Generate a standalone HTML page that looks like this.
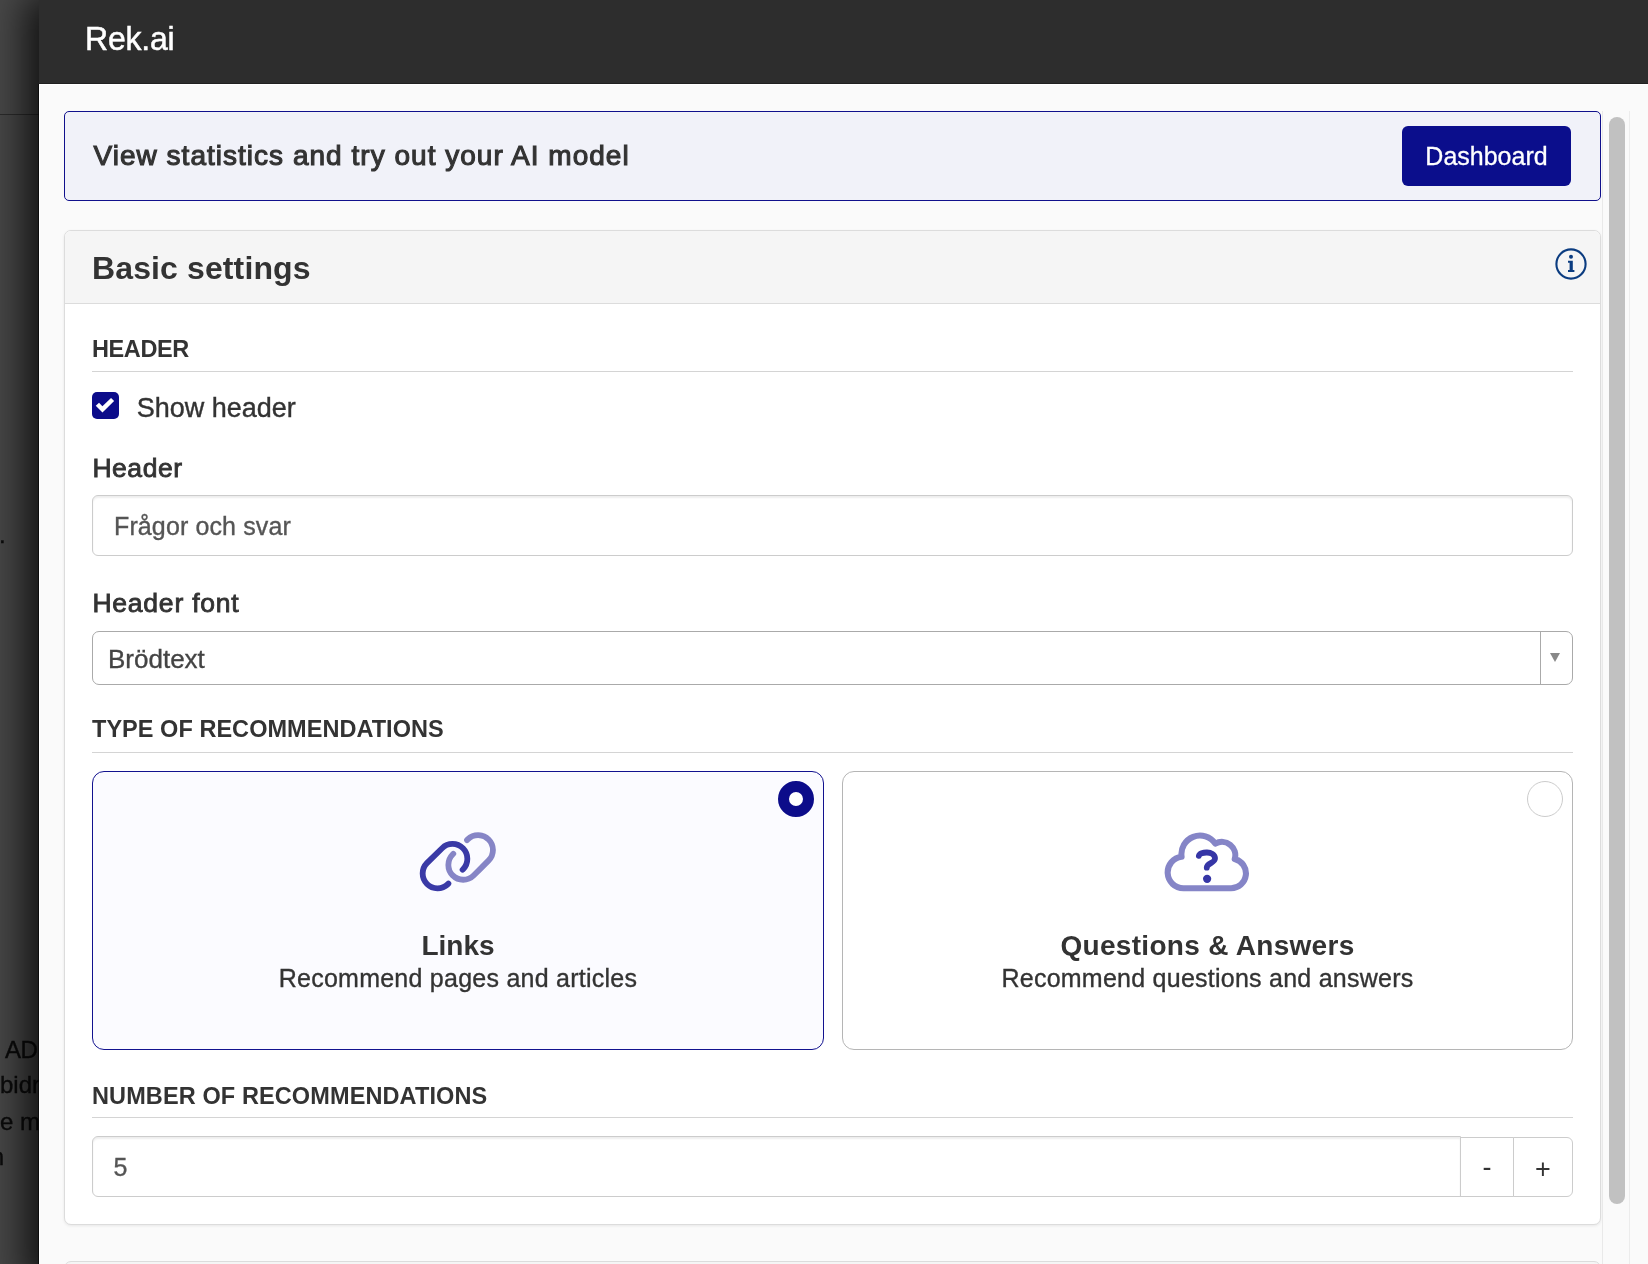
<!DOCTYPE html>
<html lang="en">
<head>
<meta charset="utf-8">
<title>Rek.ai</title>
<style>
*{box-sizing:border-box;margin:0;padding:0}
html,body{width:1648px;height:1264px;overflow:hidden}
body{font-family:"Liberation Sans",sans-serif;color:#333;background:#474747;position:relative}
/* dimmed page behind the modal */
.backdrop{position:absolute;left:0;top:0;width:39px;height:1264px;overflow:hidden;background:#474747;will-change:transform}
.backdrop .topbar{position:absolute;left:0;top:0;width:39px;height:115px;background:#484848;border-bottom:1px solid #2b2b2b}
.backdrop span{position:absolute;white-space:nowrap;font-size:24px;color:#0b0b0b;line-height:36px;-webkit-text-stroke:.35px #0b0b0b}
.edge{position:absolute;left:38px;top:84px;width:1px;height:1180px;background:rgba(0,0,0,.55)}
/* modal */
.modal{position:absolute;left:39px;top:0;width:1609px;height:1264px;background:#fafafa;overflow:hidden;will-change:transform;box-shadow:0 10px 36px 14px rgba(0,0,0,.75)}
.modal-head{height:84px;background:#2d2d2d;color:#fff;border-bottom:1px solid #202020}
.modal:before{content:"";position:absolute;left:0;top:84px;width:1609px;height:1180px;border-left:1px solid #fff;border-top:1px solid #fff;pointer-events:none}
.modal-head h1{font-weight:400;font-size:32px;line-height:1;position:absolute;left:46px;top:23px;letter-spacing:-.2px;-webkit-text-stroke:.5px #fff;transform:scaleY(1.055);transform-origin:0 27px}
.scroll{position:absolute;left:25px;top:111px;width:1537px;height:1160px}
.track{position:absolute;left:1563px;top:111px;width:28px;height:1160px;background:#fafafa;border-left:1px solid #e9e9e9;border-right:1px solid #ececec}
.thumb{position:absolute;left:1570px;top:117px;width:16px;height:1087px;border-radius:8px;background:#c1c1c1}
.banner{position:absolute;left:0;top:0;width:1537px;height:90px;border:1px solid #10108c;border-radius:5px;background:#f1f2f9}
.banner p{position:absolute;left:28.5px;top:28px;font-size:28px;line-height:32px;font-weight:400;color:#333;white-space:nowrap;letter-spacing:1.02px;-webkit-text-stroke:1.1px #333}
.btn{position:absolute;left:1337px;top:14px;width:169px;height:60px;border-radius:6px;background:#0b0e8c;color:#fff;font-size:25px;line-height:60px;-webkit-text-stroke:.3px #fff;text-align:center;border:0;font-family:inherit}
.card{position:absolute;left:0;top:119px;width:1537px;height:995px;background:#fff;border:1px solid #dcdcdc;border-radius:7px;box-shadow:0 1px 3px rgba(0,0,0,.08)}
.card2{top:1150px;height:200px;box-shadow:none;background:#f5f5f5}
.card-head{position:absolute;left:0;top:0;width:1535px;height:73px;background:#f5f5f5;border-bottom:1px solid #dcdcdc;border-radius:6px 6px 0 0}
.card-head h2{position:absolute;left:27px;top:19px;font-size:32px;line-height:36px;font-weight:700;color:#333;white-space:nowrap;letter-spacing:.12px}
.info{position:absolute;left:1488px;top:15px;width:36px;height:36px}
.sec{position:absolute;left:27px;width:1481px;border-bottom:1px solid #d4d4d4;font-size:23.5px;font-weight:700;line-height:28px;color:#333;white-space:nowrap}
.lbl{position:absolute;left:27.4px;font-size:26.5px;font-weight:400;line-height:32px;color:#333;white-space:nowrap;-webkit-text-stroke:.85px #333}
.check{position:absolute;left:27px;top:161px;width:27px;height:27px;border-radius:5px;background:#0c0c8a}
.check svg{position:absolute;left:0;top:0}
.checklbl{position:absolute;left:71.7px;top:161px;font-size:27px;line-height:32px;color:#333;white-space:nowrap;-webkit-text-stroke:.4px #333}
.input{position:absolute;left:27px;width:1481px;height:61px;border:1px solid #ccc;border-radius:6px;background:#fff;box-shadow:inset 0 2px 2px rgba(0,0,0,.07);font-size:25px;color:#555;line-height:61px;padding-left:21px;white-space:nowrap;letter-spacing:.12px;-webkit-text-stroke:.35px #555}
.select{position:absolute;left:27px;top:400px;width:1481px;height:54px;border:1px solid #aaa;border-radius:7px;background:#fff;font-size:26px;color:#444;line-height:54px;padding-left:15px;white-space:nowrap;-webkit-text-stroke:.35px #444}
.select i{position:absolute;right:0;top:0;width:32px;height:52px;border-left:1px solid #aaa}
.select i:after{content:"";position:absolute;left:9px;top:21px;border-left:5.5px solid transparent;border-right:5.5px solid transparent;border-top:9px solid #888}
.opt{position:absolute;top:540px;height:279px;border:1px solid #b5b5b5;border-radius:12px;background:#fff;text-align:center}
.opt.sel{border-color:#12128f;background:#fbfbff}
.opt h3{position:absolute;left:0;right:0;top:157px;font-size:28px;line-height:34px;font-weight:700;color:#333}
.opt p{position:absolute;left:0;right:0;top:190px;font-size:25px;line-height:32px;color:#333;letter-spacing:.25px;-webkit-text-stroke:.35px #333}
.radio{position:absolute;right:9px;top:9px;width:36px;height:36px;border-radius:50%;border:1px solid #ccc;background:#fff}
.sel .radio{border:11px solid #0c0c8a}
.opt svg{position:absolute}
.numwrap{position:absolute;left:27px;top:905px;width:1481px;height:61px}
.numwrap .input{left:0;top:0;width:1369px;height:61px;border-radius:6px 0 0 6px;padding-left:20.5px;line-height:61px}
.numwrap .b{position:absolute;top:1px;height:60px;border:1px solid #ccc;background:#fff;text-align:center;color:#333;font-size:27px;font-family:inherit;padding:0}
</style>
</head>
<body>
<div class="backdrop">
  <div class="topbar"></div>
  <span style="left:-1px;top:517px">.</span>
  <span style="left:5px;top:1031.5px;letter-spacing:-.6px">AD</span>
  <span style="left:0;top:1067px">bidr</span>
  <span style="left:0;top:1103.7px">e m</span>
  <span style="left:-9.3px;top:1139px">n</span>
</div>
<div class="edge"></div>
<div class="modal">
  <div class="modal-head"><h1>Rek.ai</h1></div>
  <div class="scroll">
    <div class="banner">
      <p>View statistics and try out your AI model</p>
      <button class="btn">Dashboard</button>
    </div>
    <section class="card">
      <div class="card-head">
        <h2>Basic settings</h2>
        <svg class="info" viewBox="0 0 36 36"><circle cx="18" cy="18" r="14.6" fill="none" stroke="#0b3c80" stroke-width="2.1"/><circle cx="18" cy="10.8" r="2" fill="#0b3c80"/><path d="M15 14.7h4.8v9.2h1.6v2h-6.4v-2h1.6v-7.2H15z" fill="#0b3c80"/></svg>
      </div>
      <div class="sec" style="top:103px;height:38px;padding-top:1px;letter-spacing:-.4px">HEADER</div>
      <div class="check"><svg width="27" height="27" viewBox="0 0 27 27"><polygon points="3.75,13.83 7.03,10.74 10.41,14.2 19.04,6 22.13,8.92 10.48,20.39" fill="#fff"/></svg></div>
      <div class="checklbl">Show header</div>
      <div class="lbl" style="top:221px;letter-spacing:.55px">Header</div>
      <div class="input" style="top:264px">Frågor och svar</div>
      <div class="lbl" style="top:356px;letter-spacing:.78px">Header font</div>
      <div class="select">Brödtext<i></i></div>
      <div class="sec" style="top:484px;height:38px;letter-spacing:.04px">TYPE OF RECOMMENDATIONS</div>
      <div class="opt sel" style="left:27px;width:732px">
        <span class="radio"></span>
        <svg style="left:317px;top:50px" width="100" height="80" viewBox="410 822 100 80" fill="none" stroke-width="5.8" stroke-linecap="round">
          <path stroke="#8685c6" d="M453.3 853.8L452.6 854.5A14.85 14.85 0 0 0 473.6 875.5L488.7 860.4A14.85 14.85 0 0 0 467.7 839.4L467 840.1"/>
          <path stroke="#3a3aa6" d="M448.4 883.6L447.9 884.1A14.85 14.85 0 0 1 426.9 863.1L442.1 848.2A14.85 14.85 0 0 1 463.1 869.2L462.6 869.7"/>
        </svg>
        <h3>Links</h3>
        <p>Recommend pages and articles</p>
      </div>
      <div class="opt" style="left:777px;width:731px">
        <span class="radio"></span>
        <svg style="left:264px;top:28px" width="200" height="120" viewBox="0 0 1648 989" fill="none">
          <path stroke="#8585c7" stroke-width="50" stroke-linejoin="round" d="M630 727A130 130 0 0 1 614.6 467.9A153 153 0 0 1 892.3 359.6A110 110 0 0 1 1052.4 486.6A122 122 0 0 1 1023 727Z"/>
          <path stroke="#3636a6" stroke-width="48" stroke-linecap="round" d="M757 460C765 425 885 415 890 480C892 520 822 520 822 558"/>
          <circle cx="825" cy="650" r="34" fill="#3636a6"/>
        </svg>
        <h3 style="letter-spacing:.3px">Questions &amp; Answers</h3>
        <p>Recommend questions and answers</p>
      </div>
      <div class="sec" style="top:849px;height:38px;padding-top:2px;letter-spacing:.11px">NUMBER OF RECOMMENDATIONS</div>
      <div class="numwrap">
        <div class="input">5</div>
        <button class="b" style="left:1368px;width:54px;line-height:58px">-</button>
        <button class="b" style="left:1421px;width:60px;line-height:62px;border-radius:0 6px 6px 0">+</button>
      </div>
    </section>
    <section class="card card2"></section>
  </div>
  <div class="track"></div>
  <div class="thumb"></div>
</div>
</body>
</html>
